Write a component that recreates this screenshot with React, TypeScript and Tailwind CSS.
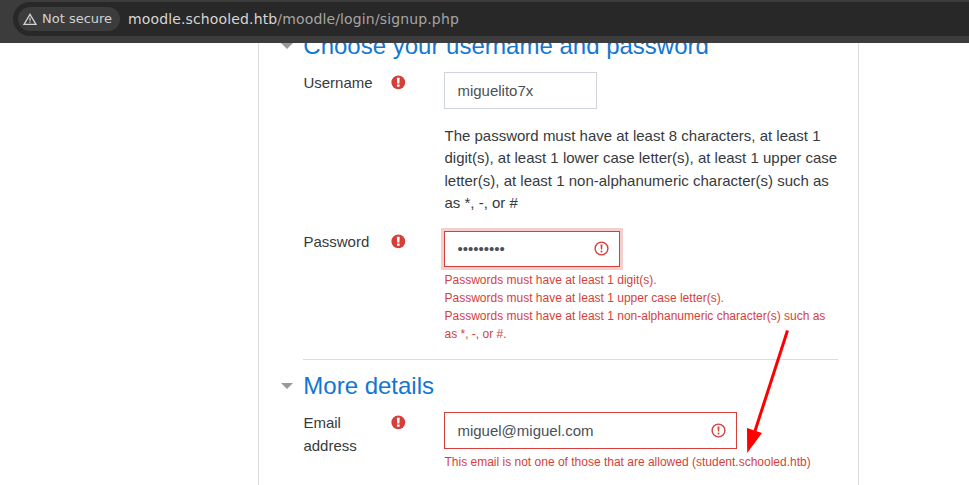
import React from "react";

function RequiredIcon() {
  return (
    <svg width="15" height="15" viewBox="0 0 15 15" className="mt-[3px] block shrink-0">
      <circle cx="7.3" cy="7.4" r="6.9" fill="#d43f3a" />
      <path d="M5.9 2.7h2.8l-.3 5.9H6.2zM6 9.6h2.6v2.2H6z" fill="#fff" />
    </svg>
  );
}

function InvalidIcon() {
  return (
    <svg width="15" height="15" viewBox="0 0 15 15" className="block shrink-0">
      <circle cx="7.5" cy="7.5" r="6.4" fill="none" stroke="#d43f3a" strokeWidth="1.4" />
      <path d="M6.5 3.5h2l-.35 5h-1.3z" fill="#d43f3a" />
      <circle cx="7.5" cy="10.6" r="1" fill="#d43f3a" />
    </svg>
  );
}

function SectionHeading({ children }: { children: React.ReactNode }) {
  return (
    <div className="flex h-[29px] items-start">
      <svg width="12" height="6" viewBox="0 0 12 6" className="ml-[22px] mr-[10.3px] mt-[12px] block shrink-0">
        <path d="M0 0h12L6 6z" fill="#999" />
      </svg>
      <h3 className="whitespace-nowrap text-[24px] leading-[29px] text-[#1177d1]">{children}</h3>
    </div>
  );
}

function Row({ label, className, children }: { label: string; className: string; children: React.ReactNode }) {
  return (
    <div className={"flex pl-[44px] " + className}>
      <label className="-mt-px w-[88px] shrink-0 pl-[0.4px] pr-4 leading-[23px]">{label}</label>
      <RequiredIcon />
      <div className="ml-[38px] flex-1">{children}</div>
    </div>
  );
}

export default function App() {
  return (
    <div className="relative h-[485px] w-[969px] overflow-hidden bg-white font-['Liberation_Sans',Arial,sans-serif] text-[15px] text-[#373a3c]">
      <header className="h-[43px] bg-[#3c3c3c] pl-[13px] pt-[2px] font-['DejaVu_Sans',sans-serif]">
        <div className="flex h-[34px] items-center rounded-l-full bg-[#282828] pl-[5px]">
          <div className="flex h-6 w-[102px] items-center rounded-full bg-[#3c3c3c] pl-[5px] text-[13px] text-[#d2d2d2]">
            <svg width="14" height="12" viewBox="0 0 14 12" className="mr-[5px] block">
              <path d="M7 1.3 13 11.3H1z" fill="none" stroke="#d2d2d2" strokeWidth="1.3" />
              <path d="M6.4 4.8h1.2v3H6.4zM6.4 8.6h1.2v1.2H6.4z" fill="#d2d2d2" />
            </svg>
            <span className="whitespace-nowrap">Not secure</span>
          </div>
          <span className="ml-2 whitespace-nowrap text-[14px] tracking-[0.14px] text-[#a5a5a5]">
            <span className="text-[#d6d6d6]">moodle.schooled.htb</span>/moodle/login/signup.php
          </span>
        </div>
      </header>
      <main className="ml-[258px] h-[442px] w-[601px] overflow-hidden border-x border-[#dadcde]">
        <div className="-mt-[12px]">
          <SectionHeading>Choose your username and password</SectionHeading>
        </div>
        <Row label="Username" className="mt-[12px]">
          <div className="flex h-[37px] w-[153px] items-center border border-[#ced4da] px-[12.4px] pt-px text-[#495057]">miguelito7x</div>
        </Row>
        <p className="ml-[185.5px] mt-[16px] w-[400px] leading-[22.4px]">
          The password must have at least 8 characters, at least 1<br />
          digit(s), at least 1 lower case letter(s), at least 1 upper case<br />
          letter(s), at least 1 non-alphanumeric character(s) such as<br />
          as *, -, or #
        </p>
        <Row label="Password" className="mt-[16px]">
          <div className="flex h-[36px] w-[176px] items-center justify-between border border-[#d43f3a] pl-[12.4px] pr-[10px] text-[#495057] shadow-[0_0_0_3px_#f4cfce]">
            <span className="pt-[2px]">•••••••••</span>
            <InvalidIcon />
          </div>
          <p className="mt-[4px] whitespace-nowrap pl-[0.5px] text-[12px] leading-[18px] text-[#d43f3a]">
            Passwords must have at least 1 digit(s).<br />
            Passwords must have at least 1 upper case letter(s).<br />
            Passwords must have at least 1 non-alphanumeric character(s) such as<br />
            as *, -, or #.
          </p>
        </Row>
        <hr className="ml-[44px] mr-[20px] mt-[16px] border-t border-[#dadcde]" />
        <div className="mt-[11px]">
          <SectionHeading>More details</SectionHeading>
        </div>
        <Row label="Email address" className="mt-[12px]">
          <div className="flex h-[37px] w-[293px] items-center justify-between border border-[#d43f3a] pl-[12.4px] pr-[10px] text-[#495057]">
            <span className="pt-[2px]">miguel@miguel.com</span>
            <InvalidIcon />
          </div>
          <p className="mt-[4px] whitespace-nowrap pl-[0.5px] text-[12px] leading-[18px] text-[#d43f3a]">
            This email is not one of those that are allowed (student.schooled.htb)
          </p>
        </Row>
      </main>
      <svg width="50" height="130" viewBox="740 325 50 130" className="pointer-events-none absolute left-[740px] top-[325px]">
        <path d="M787.5 330.5 755 431" stroke="#f00" strokeWidth="3" />
        <path d="M747 428 762 433 747.2 453z" fill="#f00" />
      </svg>
    </div>
  );
}
